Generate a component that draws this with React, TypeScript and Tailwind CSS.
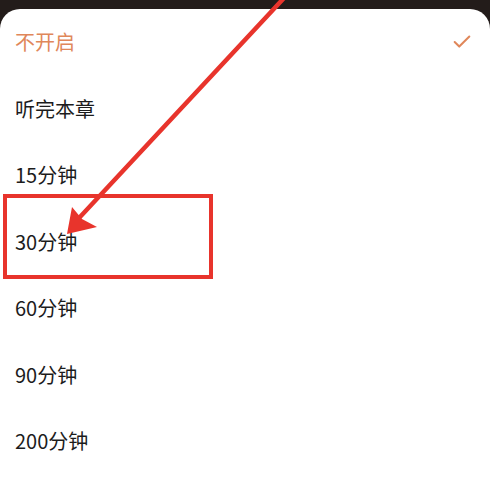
import { Check } from 'lucide-react';

const options = ['不开启', '听完本章', '15分钟', '30分钟', '60分钟', '90分钟', '200分钟'];

export default function App() {
  const selected = 0;
  return <div className="relative h-[484px] w-[490px] overflow-hidden bg-[#231c1a]" style={{ fontFamily: '"Noto Sans CJK SC", "Noto Sans", sans-serif' }}>
    <div className="mt-[9px] h-[475px] rounded-t-[20px] bg-white">
      {options.map((label, i) => <div key={label} className="flex h-[66.5px] items-center justify-between pl-[15px] pr-[17px]">
        <span className={`text-[20px] leading-none ${i === selected ? 'text-[#e0875a]' : 'text-[#1c1c1c]'}`}>{label}</span>
        {i === selected && <Check className="h-[22px] w-[22px] text-[#e0875a]" strokeWidth={2.2} />}
      </div>)}
    </div>

    {/* annotation: red box + arrow drawn over the list */}
    <div className="pointer-events-none absolute left-[3px] top-[194px] h-[85px] w-[210px] border-[4px] border-[#e8342c]" />
    <svg className="pointer-events-none absolute left-0 top-0" width="490" height="484" viewBox="0 0 490 484">
      <line x1="284" y1="-2" x2="80" y2="217" stroke="#e8342c" strokeWidth="4.5" strokeLinecap="round" />
      <polygon points="67,234 72,207 82,219 97,227" fill="#e8342c" />
    </svg>
  </div>;
}
